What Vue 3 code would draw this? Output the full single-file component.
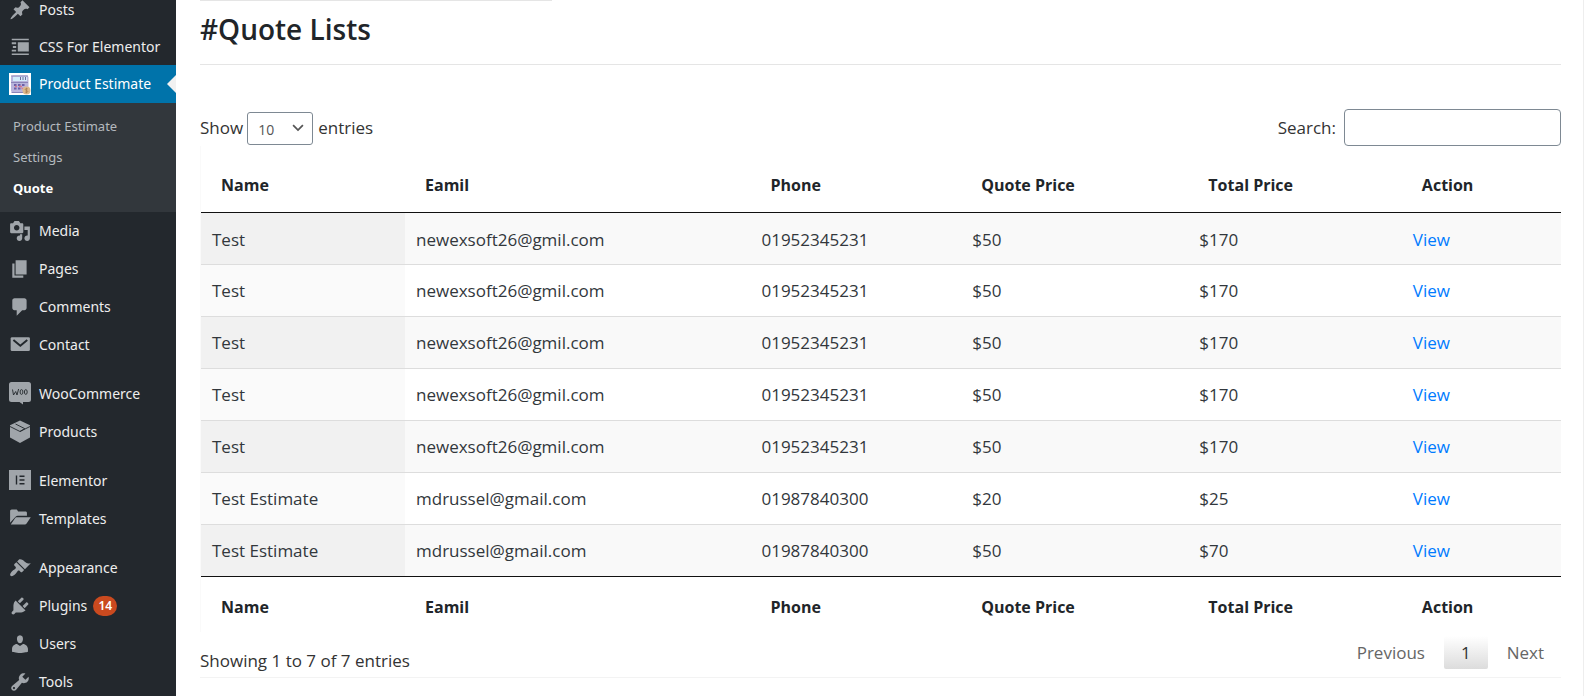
<script setup>
import { ref } from 'vue'

const topItems = [
  { label: 'Posts', icon: 'post' },
  { label: 'CSS For Elementor', icon: 'css' },
]
const groups = [
  [
    { label: 'Media', icon: 'media' },
    { label: 'Pages', icon: 'page' },
    { label: 'Comments', icon: 'comment' },
    { label: 'Contact', icon: 'mail' },
  ],
  [
    { label: 'WooCommerce', icon: 'woo' },
    { label: 'Products', icon: 'box' },
  ],
  [
    { label: 'Elementor', icon: 'elementor' },
    { label: 'Templates', icon: 'folder' },
  ],
  [
    { label: 'Appearance', icon: 'brush' },
    { label: 'Plugins', icon: 'plug', badge: 14 },
    { label: 'Users', icon: 'user' },
    { label: 'Tools', icon: 'tool' },
  ],
]
const paths = {
  post: 'M10.44 3.02l1.82-1.82 6.36 6.35-1.83 1.82c-1.05-.68-2.48-.57-3.41.36l-.75.75c-.92.93-1.04 2.35-.35 3.41l-1.83 1.82-2.41-2.41-2.8 2.79c-.42.42-3.38 2.71-3.8 2.29s1.86-3.39 2.28-3.81l2.79-2.79L4.1 9.36l1.83-1.82c1.05.69 2.48.57 3.4-.36l.75-.75c.93-.92 1.05-2.35.36-3.41z',
  css: 'M2.500 2.500h15.500v1.400H2.500zM2.500 15.800h15.500v1.400H2.500zM8 5.600h10v8.600H8zM2.500 5.600h4v1.800h-4zM3.500 9h3v1.800h-3zM2.500 12.400h4v1.800h-4z',
  media: 'M13 11V4c0-.55-.45-1-1-1h-1.67L9 1H5L3.67 3H2c-.55 0-1 .45-1 1v7c0 .55.45 1 1 1h10c.55 0 1-.45 1-1zM7 4.5c1.38 0 2.5 1.12 2.5 2.5S8.38 9.5 7 9.5 4.5 8.38 4.5 7 5.62 4.5 7 4.5zM14 6h5v10.5c0 1.38-1.12 2.5-2.5 2.5S14 17.88 14 16.5s1.12-2.5 2.5-2.5c.17 0 .34.02.5.05V9h-3V6zm-4 8.05V13h2v3.5c0 1.38-1.12 2.5-2.5 2.5S7 17.88 7 16.5 8.12 14 9.5 14c.17 0 .34.02.5.05z',
  page: 'M6 15V2h10v13H6zm-1 1h8v2H3V5h2v11z',
  comment: 'M5 2h9c1.1 0 2 .9 2 2v7c0 1.1-.9 2-2 2h-2l-5 5v-5H5c-1.1 0-2-.9-2-2V4c0-1.1.9-2 2-2z',
  brush: 'M14.48 11.06L7.41 3.99l1.5-1.5c.5-.56 2.3-.47 3.51.32 1.21.8 1.43 1.28 2.91 2.1 1.18.64 2.45 1.26 4.45.85zm-.71.71L6.7 4.7 4.93 6.47c-.39.39-.39 1.02 0 1.41l1.06 1.06c.39.39.39 1.03 0 1.42-.6.6-1.43 1.11-2.21 1.69-.35.26-.7.53-1.01.84C1.43 14.23.4 16.08 1.4 17.07c.99 1 2.84-.03 4.18-1.36.31-.31.58-.66.85-1.02.57-.78 1.08-1.61 1.69-2.21.39-.39 1.02-.39 1.41 0l1.06 1.06c.39.39 1.02.39 1.41 0z',
  plug: 'M13.11 4.36L9.87 7.6 8 5.73l3.24-3.24c.35-.34 1.05-.2 1.56.32.52.51.66 1.21.31 1.55zm-8 1.77l.91-1.12 9.01 9.01-1.19.84c-.71.71-2.63 1.16-3.82 1.16H6.14L4.9 17.26c-.59.59-1.54.59-2.12 0-.59-.58-.59-1.53 0-2.12l1.24-1.24v-3.88c0-1.13.4-3.19 1.09-3.89zm7.26 3.97l3.24-3.24c.34-.35 1.04-.21 1.55.31.52.51.66 1.21.31 1.55l-3.24 3.25z',
  user: 'M10 9.25c-2.27 0-2.73-3.44-2.73-3.44C7 4.02 7.82 2 9.97 2c2.16 0 2.98 2.02 2.71 3.81 0 0-.41 3.44-2.68 3.44zm0 2.57L12.72 10c2.39 0 4.52 2.33 4.52 4.53v2.49s-3.65 1.13-7.24 1.13c-3.65 0-7.24-1.13-7.24-1.13v-2.49c0-2.25 1.94-4.48 4.47-4.48z',
  tool: 'M16.68 9.77c-1.34 1.34-3.3 1.67-4.95.99l-5.41 6.52c-.99.99-2.59.99-3.58 0s-.99-2.59 0-3.57l6.52-5.42c-.68-1.65-.35-3.61.99-4.95 1.28-1.28 3.12-1.62 4.72-1.06l-2.89 2.89 2.82 2.82 2.86-2.87c.53 1.58.18 3.39-1.08 4.65zM3.81 16.21c.4.39 1.04.39 1.43 0 .4-.4.4-1.04 0-1.43-.39-.4-1.03-.4-1.43 0-.39.39-.39 1.03 0 1.43z',
  folder: 'M1 13.500V3c0-1 .6-1.700 1.500-1.700h4c.8 0 1.200.5 1.500 1.400l.3.500h6.700c.8 0 1.300.5 1.300 1.300V7H8c-.8 0-1.400.3-2 1L1 13.500zM7 8.300H19.800L16 14c-.4.7-.9 1-1.600 1H1.600L5.500 9.300c.4-.7.800-1 1.500-1z',
}

const columns = ['Name', 'Eamil', 'Phone', 'Quote Price', 'Total Price', 'Action']
const newex = ['Test', 'newexsoft26@gmil.com', '01952345231', '$50', '$170']
const rows = [
  newex,
  newex,
  newex,
  newex,
  newex,
  ['Test Estimate', 'mdrussel@gmail.com', '01987840300', '$20', '$25'],
  ['Test Estimate', 'mdrussel@gmail.com', '01987840300', '$50', '$70'],
]
const pageSize = ref('10')
const search = ref('')
</script>

<template>
  <div class="admin">
    <nav class="sidebar" aria-label="Main menu">
      <a v-for="item in topItems" :key="item.label" href="#" class="item compact">
        <svg class="icon" viewBox="0 0 20 20" aria-hidden="true"><path :d="paths[item.icon]" /></svg>
        {{ item.label }}
      </a>
      <a href="#" class="item current">
        <svg class="icon" viewBox="0 0 22 22" aria-hidden="true">
          <rect width="22" height="22" fill="#fff" />
          <rect x="2" y="2.500" width="17.500" height="17" rx="2" fill="#b9b4dc" />
          <rect x="4" y="3.500" width="14" height="4.500" fill="#d3ecfb" />
          <path d="M11.500 4v3M14 4v3M16.500 4v3" stroke="#6f6a9c" stroke-width="1" />
          <path d="M2 3h17M2 9.500h17M2.500 19.500h14" stroke="#8a84b8" stroke-width="1" />
          <path d="M5 12h2.500M9 12h2.500M13 12h2.500M5 15.500h2.500M9 15.500h2.500" stroke="#6d5fa8" stroke-width="1.800" />
          <path d="M12.500 15.500h2M10 13.500h3M6 13.500h2" stroke="#d87a8e" stroke-width="1.400" />
          <circle cx="17.500" cy="17.500" r="4" fill="#dcb98c" />
          <path d="M18.800 16c-1-.7-2.600-.5-2.600.5 0 1.200 2.600.8 2.600 2 0 1-1.700 1.200-2.700.4M17.500 14.800v5.400" fill="none" stroke="#a87f50" stroke-width=".8" />
        </svg>
        Product Estimate
      </a>
      <div class="submenu">
        <a href="#">Product Estimate</a>
        <a href="#">Settings</a>
        <a href="#" class="active">Quote</a>
      </div>
      <div v-for="(group, g) in groups" :key="g" class="group">
        <a v-for="item in group" :key="item.label" href="#" class="item">
          <svg v-if="item.icon === 'mail'" class="icon" viewBox="0 0 20 20" aria-hidden="true">
            <rect x="1.500" y="3" width="17.500" height="12.500" rx="1.200" />
            <path d="M4 5.500l6.300 5.200 6.300-5.200" class="cut" />
          </svg>
          <svg v-else-if="item.icon === 'woo'" class="icon" viewBox="0 0 22 22" aria-hidden="true">
            <path d="M2.500-1h17A2.500 2.500 0 0 1 22 1.500v15a2.500 2.500 0 0 1-2.500 2.500H14v2.500L10.500 19h-8A2.500 2.500 0 0 1 0 16.500v-15A2.500 2.500 0 0 1 2.500-1z" />
            <path d="M3.500 6.500l1 5.500 2.200-3.500L8 12l1.600-6" class="thin" />
            <ellipse cx="12.500" cy="9" rx="1.400" ry="2.400" class="thin" />
            <ellipse cx="16.800" cy="9" rx="1.400" ry="2.400" class="thin" />
          </svg>
          <svg v-else-if="item.icon === 'box'" class="icon" viewBox="0 0 22 22" aria-hidden="true">
            <path d="M11-.5l10 4.800v12.200L11 22 1 16.500V4.300z" />
            <path d="M1 5.500l10 5 10-5M6.500 3l9 4.500M11 10.500l5-3" class="thin" />
          </svg>
          <svg v-else-if="item.icon === 'elementor'" class="icon" viewBox="0 0 22 22" aria-hidden="true">
            <rect x="0" y="0" width="22" height="20" />
            <path d="M7.500 5.500v9M10.500 6.200H15.500M10.500 10H15.500M10.500 13.800H15.500" class="bars" />
          </svg>
          <svg v-else class="icon" viewBox="0 0 20 20" aria-hidden="true"><path :d="paths[item.icon]" fill-rule="evenodd" /></svg>
          {{ item.label }}
          <span v-if="item.badge" class="badge">{{ item.badge }}</span>
        </a>
      </div>
    </nav>

    <main class="content">
      <div class="notice"></div>
      <h1>#Quote Lists</h1>
      <section class="panel">
        <div class="toolbar">
          <label class="length">
            Show
            <span class="picker">
              <select v-model="pageSize">
                <option>10</option>
                <option>25</option>
                <option>50</option>
                <option>100</option>
              </select>
              <svg viewBox="0 0 20 20" aria-hidden="true"><path d="M3 6l7 7 7-7" /></svg>
            </span>
            entries
          </label>
          <label class="search">Search: <input v-model="search" type="search" /></label>
        </div>
        <table>
          <colgroup>
            <col v-for="n in 6" :key="n" :class="'c' + n" />
          </colgroup>
          <thead>
            <tr><th v-for="c in columns" :key="c" scope="col">{{ c }}</th></tr>
          </thead>
          <tbody>
            <tr v-for="(row, r) in rows" :key="r">
              <td v-for="(cell, i) in row" :key="i">{{ cell }}</td>
              <td><a href="#">View</a></td>
            </tr>
          </tbody>
          <tfoot>
            <tr><th v-for="c in columns" :key="c" scope="col">{{ c }}</th></tr>
          </tfoot>
        </table>
        <div class="footer">
          <div class="info">Showing 1 to 7 of 7 entries</div>
          <div class="paging">
            <button type="button">Previous</button>
            <button type="button" class="on">1</button>
            <button type="button">Next</button>
          </div>
        </div>
      </section>
    </main>
  </div>
</template>

<style>
body {
  background: #fff;
  overflow: hidden;
}
</style>

<style scoped>
.admin,
.admin * {
  box-sizing: border-box;
}
.admin {
  display: flex;
  height: 100vh;
  overflow: hidden;
  font-family: 'Segoe UI', 'Open Sans', sans-serif;
  font-size: 17px;
  line-height: 24px;
  color: #333;
}
a {
  text-decoration: none;
}
.sidebar {
  flex: 0 0 176px;
  background: #23282d;
  margin-top: -9px;
  font-family: 'Segoe UI', 'Noto Sans', sans-serif;
  font-size: 14px;
}
.item {
  position: relative;
  display: flex;
  align-items: center;
  height: 38px;
  padding-left: 9px;
  color: #eee;
  white-space: nowrap;
}
.item.compact {
  height: 37px;
}
.icon {
  flex: none;
  width: 22px;
  height: 22px;
  margin-right: 8px;
  fill: #a0a5aa;
  overflow: visible;
}
.cut,
.thin,
.bars {
  fill: none;
  stroke: #23282d;
}
.cut {
  stroke-width: 1.8;
}
.thin {
  stroke-width: 0.9;
}
.bars {
  stroke-width: 1.4;
}
.current {
  background: #0073aa;
  color: #fff;
}
.current::after {
  content: '';
  position: absolute;
  right: 0;
  top: 10px;
  border: 9px solid transparent;
  border-left-width: 0;
  border-right-color: #f1f1f1;
}
.submenu {
  background: #32373c;
  padding: 8px 0;
  font-size: 13px;
}
.submenu a {
  display: block;
  padding-left: 13px;
  line-height: 31px;
  color: #b4b9be;
}
.submenu .active {
  color: #fff;
  font-weight: 700;
}
.group {
  padding-bottom: 11px;
}
.badge {
  margin-left: 6px;
  width: 24px;
  border-radius: 10px;
  background: #ca4a1f;
  color: #fff;
  font-size: 12px;
  font-weight: 600;
  line-height: 20px;
  text-align: center;
}
.content {
  flex: 1;
  min-width: 0;
  padding: 0 22px 0 24px;
  border-right: 1px solid #eee;
}
.notice {
  width: 352px;
  height: 1px;
  background: #e5e5e5;
}
h1 {
  margin: 0 0 44px;
  padding: 10px 0 17px;
  border-bottom: 1px solid #e5e5e5;
  color: #212529;
  font-size: 28px;
  font-weight: 600;
  line-height: 36px;
}
.panel {
  border-bottom: 1px solid #f3f3f3;
  padding-bottom: 4px;
}
.toolbar {
  display: flex;
  justify-content: space-between;
  align-items: center;
}
.length,
.search {
  display: flex;
  align-items: center;
}
.picker {
  position: relative;
  margin: 2px 5px 0 4px;
  display: flex;
}
select {
  appearance: none;
  width: 66px;
  height: 33px;
  padding: 2px 0 0 10px;
  border: 1px solid #7e8993;
  border-radius: 3px;
  background: #fff;
  color: #555;
  font: inherit;
  font-size: 14px;
}
.picker svg {
  position: absolute;
  right: 8px;
  top: 9px;
  width: 14px;
  height: 14px;
  fill: none;
  stroke: #555;
  stroke-width: 2.5;
  pointer-events: none;
}
input {
  width: 217px;
  height: 37px;
  margin-left: 8px;
  padding: 0 8px;
  border: 1px solid #7e8993;
  border-radius: 4px;
  background: #fff;
  font: inherit;
}
table {
  width: 100%;
  table-layout: fixed;
  border-collapse: separate;
  border-spacing: 0;
  color: #32373c;
  border-left: 1px solid #fafafa;
}
.c1 { width: 15%; }
.c2 { width: 25.4%; }
.c3 { width: 15.5%; }
.c4 { width: 16.7%; }
.c5 { width: 15.7%; }
.c6 { width: 11.7%; }
th {
  padding: 27px 20px 15px;
  text-align: left;
  color: #212529;
  font-size: 16px;
  font-weight: 700;
}
thead th {
  border-bottom: 1px solid #111;
}
tfoot th {
  padding: 18px 20px 13px;
  border-top: 1px solid #111;
}
td {
  padding: 14px 11px 13px;
  border-top: 1px solid #ddd;
}
tbody tr:first-child td {
  padding-top: 15px;
  padding-bottom: 12px;
  border-top: 0;
}
tbody tr:nth-child(odd) {
  background: #f9f9f9;
}
tbody tr:nth-child(odd) td:first-child {
  background: #f1f1f1;
}
tbody tr:nth-child(even) td:first-child {
  background: #fafafa;
}
td a {
  color: #007bff;
}
.footer {
  display: flex;
  justify-content: space-between;
  align-items: flex-start;
}
.info {
  padding-top: 17px;
}
.paging {
  display: flex;
  gap: 2px;
  padding-top: 4px;
}
button {
  height: 33px;
  padding: 0 17px;
  border: 0;
  border-radius: 2px;
  background: transparent;
  color: #666;
  font: inherit;
}
.on {
  background: linear-gradient(#fff, #dcdcdc);
  color: #333;
}
</style>
